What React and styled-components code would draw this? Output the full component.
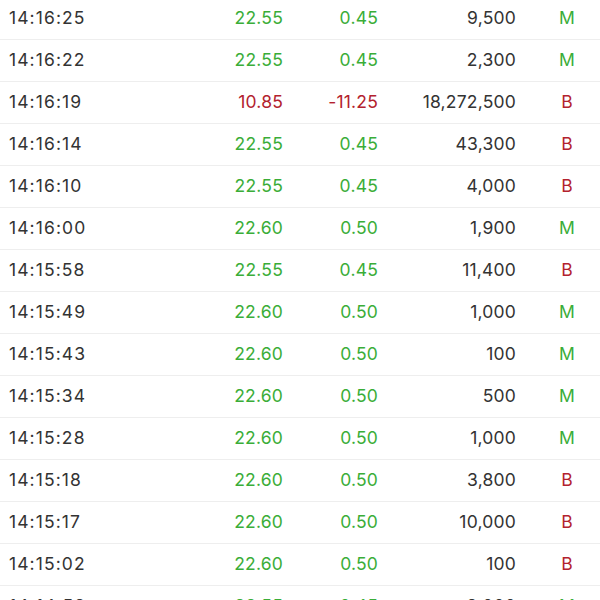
import React from "react";
import styled, { createGlobalStyle } from "styled-components";

const Global = createGlobalStyle`
  html, body { margin: 0; padding: 0; background: #ffffff; }
  body { font-family: Inter, "Liberation Sans", Arial, sans-serif; overflow: hidden; }
`;

const List = styled.div`
  margin-top: -2px;
  background: #ffffff;
`;

const Row = styled.div`
  display: grid;
  grid-template-columns: 140px 134px 95px 138px 1fr;
  align-items: center;
  box-sizing: content-box;
  height: 39px;
  padding: 0 0 2px 9px;
  border-bottom: 1px solid #eeeeee;
  font-size: 17.5px;
  letter-spacing: 0.2px;
  color: #333333;
`;

const Time = styled.span`
  color: #333333;
  letter-spacing: 1.1px;
`;

const Num = styled.span`
  text-align: right;
  color: ${(p) => (p.$tone === "up" ? "#3aad38" : p.$tone === "down" ? "#b3222e" : "#333333")};
`;

const Side = styled.span`
  text-align: center;
  padding-left: 18px;
  color: ${(p) => (p.$side === "M" ? "#3aad38" : "#b3222e")};
`;

const rows = [
  ["14:16:25", "22.55", "0.45", "9,500", "M", "up"],
  ["14:16:22", "22.55", "0.45", "2,300", "M", "up"],
  ["14:16:19", "10.85", "-11.25", "18,272,500", "B", "down"],
  ["14:16:14", "22.55", "0.45", "43,300", "B", "up"],
  ["14:16:10", "22.55", "0.45", "4,000", "B", "up"],
  ["14:16:00", "22.60", "0.50", "1,900", "M", "up"],
  ["14:15:58", "22.55", "0.45", "11,400", "B", "up"],
  ["14:15:49", "22.60", "0.50", "1,000", "M", "up"],
  ["14:15:43", "22.60", "0.50", "100", "M", "up"],
  ["14:15:34", "22.60", "0.50", "500", "M", "up"],
  ["14:15:28", "22.60", "0.50", "1,000", "M", "up"],
  ["14:15:18", "22.60", "0.50", "3,800", "B", "up"],
  ["14:15:17", "22.60", "0.50", "10,000", "B", "up"],
  ["14:15:02", "22.60", "0.50", "100", "B", "up"],
  ["14:14:58", "22.55", "0.45", "2,000", "M", "up"],
];

export default function App() {
  return (
    <>
      <Global />
      <List>
        {rows.map(([t, p, c, v, s, tone], i) => (
          <Row key={i}>
            <Time>{t}</Time>
            <Num $tone={tone}>{p}</Num>
            <Num $tone={tone}>{c}</Num>
            <Num>{v}</Num>
            <Side $side={s}>{s}</Side>
          </Row>
        ))}
      </List>
    </>
  );
}
